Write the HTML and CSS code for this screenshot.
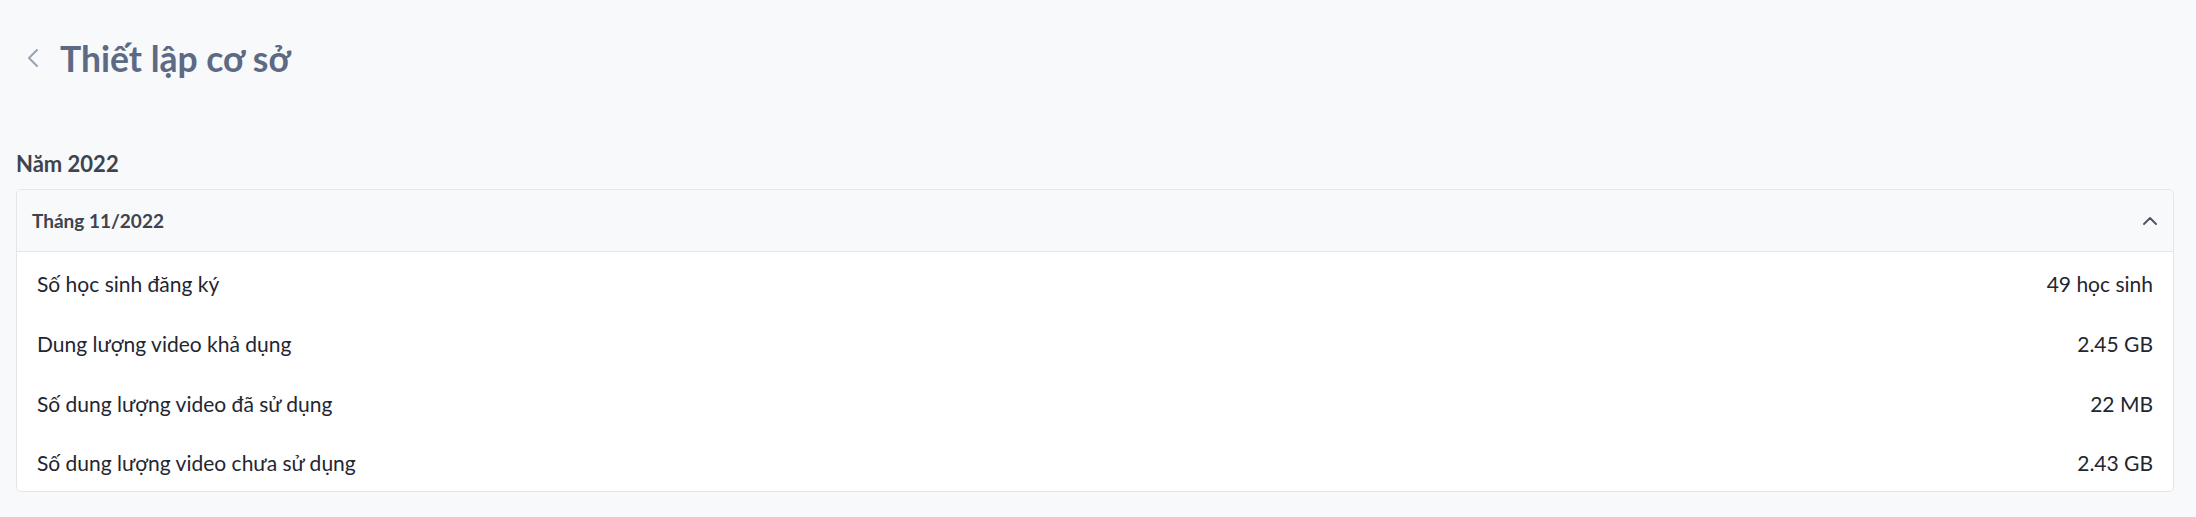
FILE: index.html
```html
<!DOCTYPE html>
<html lang="vi">
<head>
    <meta charset="UTF-8">
    <meta name="viewport" content="width=device-width, initial-scale=1.0">
    <title>Thiết lập cơ sở</title>
    <link rel="stylesheet" href="styles.css">
</head>
<body>
    <div class="page">
        <div class="title-bar">
            <a href="#" class="back">
                <svg width="12" height="20" viewBox="0 0 12 20"><path d="M10 2 L2 10 L10 18" fill="none" stroke="#97a3b6" stroke-width="2" stroke-linecap="round" stroke-linejoin="round"/></svg>
            </a>
            <h1 class="title">Thiết lập cơ sở</h1>
        </div>

        <h2 class="year">Năm 2022</h2>
        <div class="panel">
            <div class="panel-head">
                <span>Tháng 11/2022</span>
                <svg width="14" height="8" viewBox="0 0 14 8"><path d="M1 7 L7 1 L13 7" fill="none" stroke="#4b5260" stroke-width="1.8" stroke-linecap="round" stroke-linejoin="round"/></svg>
            </div>
            <div class="panel-body">
                <div class="row"><span>Số học sinh đăng ký</span><span>49 học sinh</span></div>
                <div class="row"><span>Dung lượng video khả dụng</span><span>2.45 GB</span></div>
                <div class="row"><span>Số dung lượng video đã sử dụng</span><span>22 MB</span></div>
                <div class="row"><span>Số dung lượng video chưa sử dụng</span><span>2.43 GB</span></div>
            </div>
        </div>
    </div>
</body>
</html>
```

FILE: styles.css
```css
body {
    margin: 0;
    background-color: #f8f9fb;
    font-family: "Lato", "Noto Sans", sans-serif;
}
.page {
    padding: 0 22px 0 16px;
}
.title-bar {
    display: flex;
    align-items: center;
    gap: 21px;
    height: 116px;
    padding-left: 11px;
}
.back {
    display: flex;
    align-items: center;
}
.title {
    margin: 0;
    font-size: 35.5px;
    font-weight: 700;
    color: #5c6a84;
}
.year {
    margin: 33px 0 10px 0;
    font-size: 22px;
    font-weight: 700;
    color: #3e4350;
    line-height: 30px;
}
.panel {
    border: 1px solid #e3e6eb;
    border-radius: 5px;
    overflow: hidden;
    background: #fff;
}
.panel-head {
    display: flex;
    align-items: center;
    justify-content: space-between;
    height: 61px;
    padding: 0 16px 0 15px;
    background: #f8f9fb;
    border-bottom: 1px solid #e3e6eb;
    font-size: 19px;
    font-weight: 700;
    color: #3e4350;
}
.panel-body {
    padding: 1px 20px 0 20px;
}
.row {
    display: flex;
    justify-content: space-between;
    height: 60px;
    align-items: center;
    font-size: 21px;
    color: #222631;
}
.row:last-child {
    height: 58px;
}
```
